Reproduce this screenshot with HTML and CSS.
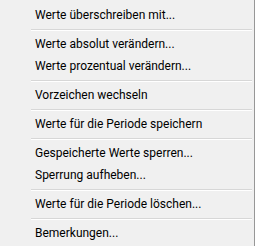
FILE: index.html
```html
<!DOCTYPE html>
<html lang="de">
<head>
    <meta charset="UTF-8">
    <title>Kontextmenü</title>
    <link rel="stylesheet" href="styles.css">
</head>
<body>
    <ul class="menu">
        <li class="item">Werte überschreiben mit...</li>
        <li class="sep"></li>
        <li class="item">Werte absolut verändern...</li>
        <li class="item">Werte prozentual verändern...</li>
        <li class="sep"></li>
        <li class="item">Vorzeichen wechseln</li>
        <li class="sep"></li>
        <li class="item">Werte für die Periode speichern</li>
        <li class="sep"></li>
        <li class="item">Gespeicherte Werte sperren...</li>
        <li class="item">Sperrung aufheben...</li>
        <li class="sep"></li>
        <li class="item">Werte für die Periode löschen...</li>
        <li class="sep"></li>
        <li class="item">Bemerkungen...</li>
    </ul>
</body>
</html>
```

FILE: styles.css
```css
html, body {
    margin: 0;
    padding: 0;
    background-color: #f0f0f0;
}

.menu {
    list-style: none;
    margin: 0;
    width: 254px;
    height: 241px; /* 246 - Rahmen - Innenabstand */
    padding: 4px 0 1px 0;
    border-right: 1px solid #979797;
    border-bottom: 1px solid #979797;
    background-color: #f0f0f0;
    font-family: Roboto, "Noto Sans", sans-serif;
    font-size: 12px;
    color: #000;
}

.item {
    height: 22px;
    line-height: 22px;
    padding-left: 35px;
    white-space: nowrap;
}

.sep {
    height: 7px;
    box-sizing: border-box;
    padding-top: 3px;
    margin: 0 2px 0 31px;
}

.sep::before {
    content: "";
    display: block;
    height: 0;
    border-top: 1px solid #d7d7d7;
    border-bottom: 1px solid #ffffff;
}
```
